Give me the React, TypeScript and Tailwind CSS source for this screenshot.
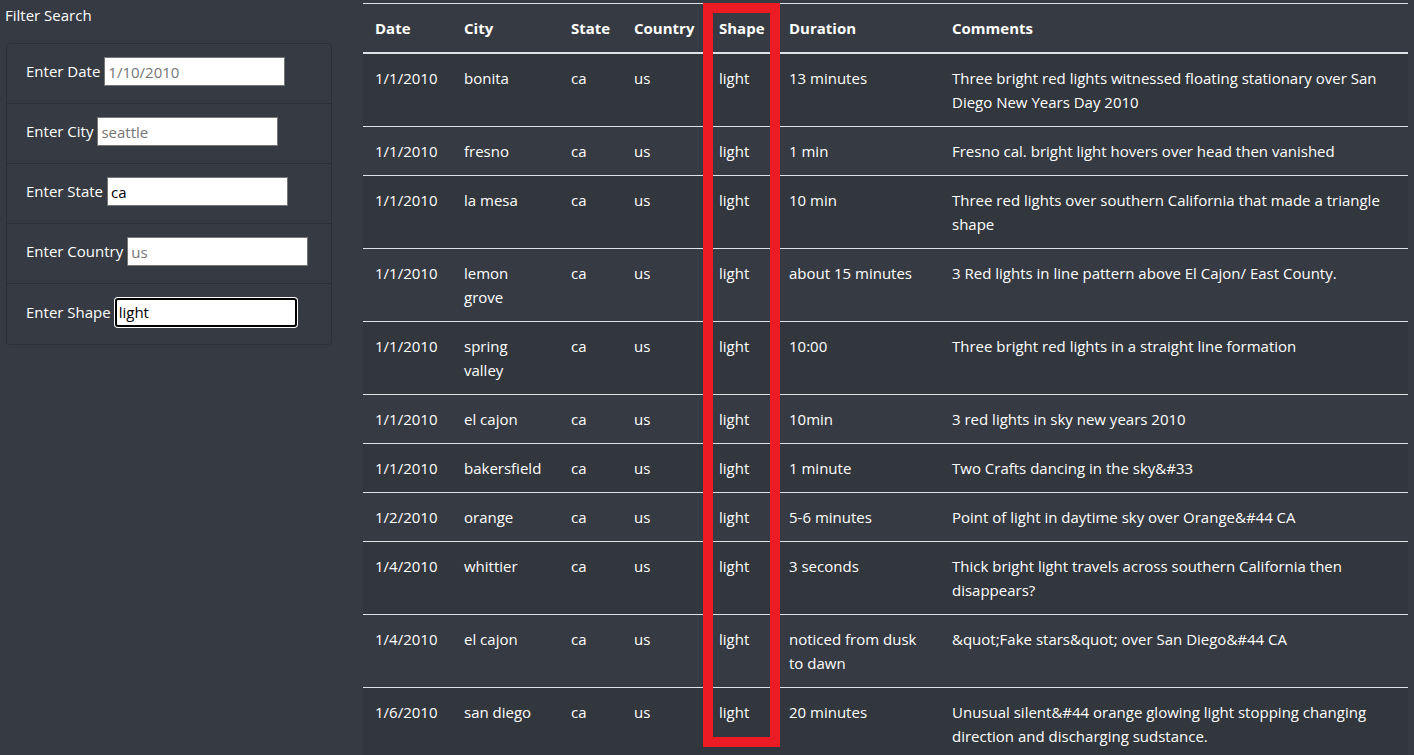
import React from "react";

const rows = [
  ["1/1/2010", "bonita", "ca", "us", "light", "13 minutes", "Three bright red lights witnessed floating stationary over San Diego New Years Day 2010"],
  ["1/1/2010", "fresno", "ca", "us", "light", "1 min", "Fresno cal. bright light hovers over head then vanished"],
  ["1/1/2010", "la mesa", "ca", "us", "light", "10 min", "Three red lights over southern California that made a triangle shape"],
  ["1/1/2010", "lemon grove", "ca", "us", "light", "about 15 minutes", "3 Red lights in line pattern above El Cajon/ East County."],
  ["1/1/2010", "spring valley", "ca", "us", "light", "10:00", "Three bright red lights in a straight line formation"],
  ["1/1/2010", "el cajon", "ca", "us", "light", "10min", "3 red lights in sky new years 2010"],
  ["1/1/2010", "bakersfield", "ca", "us", "light", "1 minute", "Two Crafts dancing in the sky&#33"],
  ["1/2/2010", "orange", "ca", "us", "light", "5-6 minutes", "Point of light in daytime sky over Orange&#44 CA"],
  ["1/4/2010", "whittier", "ca", "us", "light", "3 seconds", "Thick bright light travels across southern California then disappears?"],
  ["1/4/2010", "el cajon", "ca", "us", "light", "noticed from dusk to dawn", "&quot;Fake stars&quot; over San Diego&#44 CA"],
  ["1/6/2010", "san diego", "ca", "us", "light", "20 minutes", "Unusual silent&#44 orange glowing light stopping changing direction and discharging sudstance."],
];

const filters = [
  { label: "Enter Date", placeholder: "1/10/2010", value: "" },
  { label: "Enter City", placeholder: "seattle", value: "" },
  { label: "Enter State", placeholder: "", value: "ca" },
  { label: "Enter Country", placeholder: "us", value: "" },
];

const App = () => {
  return (
    <div
      className="min-h-screen bg-[#363a42] text-white flex"
      style={{ fontFamily: '"Open Sans", "Noto Sans", sans-serif' }}
    >
      {/* Filters */}
      <div className="w-[363px] shrink-0 pl-[6px] pr-[31px]">
        <div className="pt-[4px] -ml-[1px] text-[15px] leading-[22px]">Filter Search</div>
        <ul className="mt-[17px] border border-[#2c3036] rounded">
          {filters.map((f) => (
            <li key={f.label} className="h-[60px] flex items-center pb-[4px] pl-[19px] border-b border-[#2c3036] text-[15px]">
              <span>{f.label}</span>
              <input
                readOnly
                className="ml-[4px] h-[29px] w-[181px] bg-white border border-[#767676] px-[3px] text-[15px] text-black placeholder:text-[#757575] outline-none"
                placeholder={f.placeholder}
                value={f.value}
              />
            </li>
          ))}
          <li className="h-[60px] flex items-center pb-[4px] pl-[19px] text-[15px]">
            <span>Enter Shape</span>
            <input
              readOnly
              className="ml-[4px] h-[29px] w-[182px] bg-white border-2 border-black rounded-[3px] ring-1 ring-white px-[2px] text-[15px] text-black outline-none"
              value="light"
            />
          </li>
        </ul>
      </div>

      {/* Table */}
      <div className="relative w-[1045px] pt-[3px]">
        <table className="w-full table-fixed border-collapse text-[15px] leading-[24px]">
          <colgroup>
            <col className="w-[89px]" />
            <col className="w-[107px]" />
            <col className="w-[63px]" />
            <col className="w-[85px]" />
            <col className="w-[70px]" />
            <col className="w-[163px]" />
            <col />
          </colgroup>
          <thead>
            <tr className="border-t border-[#dee2e6] border-b-2">
              {["Date", "City", "State", "Country", "Shape", "Duration", "Comments"].map((h) => (
                <th key={h} className="px-3 py-3 text-left font-bold align-bottom">
                  {h}
                </th>
              ))}
            </tr>
          </thead>
          <tbody>
            {rows.map((r, i) => (
              <tr key={i} className={`border-t border-[#dee2e6] ${i % 2 === 0 ? "bg-[#32363d]" : ""}`}>
                {r.map((c, j) => (
                  <td key={j} className="px-3 py-3 align-top">
                    {c}
                  </td>
                ))}
              </tr>
            ))}
          </tbody>
        </table>

        {/* highlight annotation */}
        <div className="absolute left-[340px] top-[3px] w-[77px] h-[744px] border-[10px] border-[#ed1c24]" />
      </div>
    </div>
  );
};

export default App;
